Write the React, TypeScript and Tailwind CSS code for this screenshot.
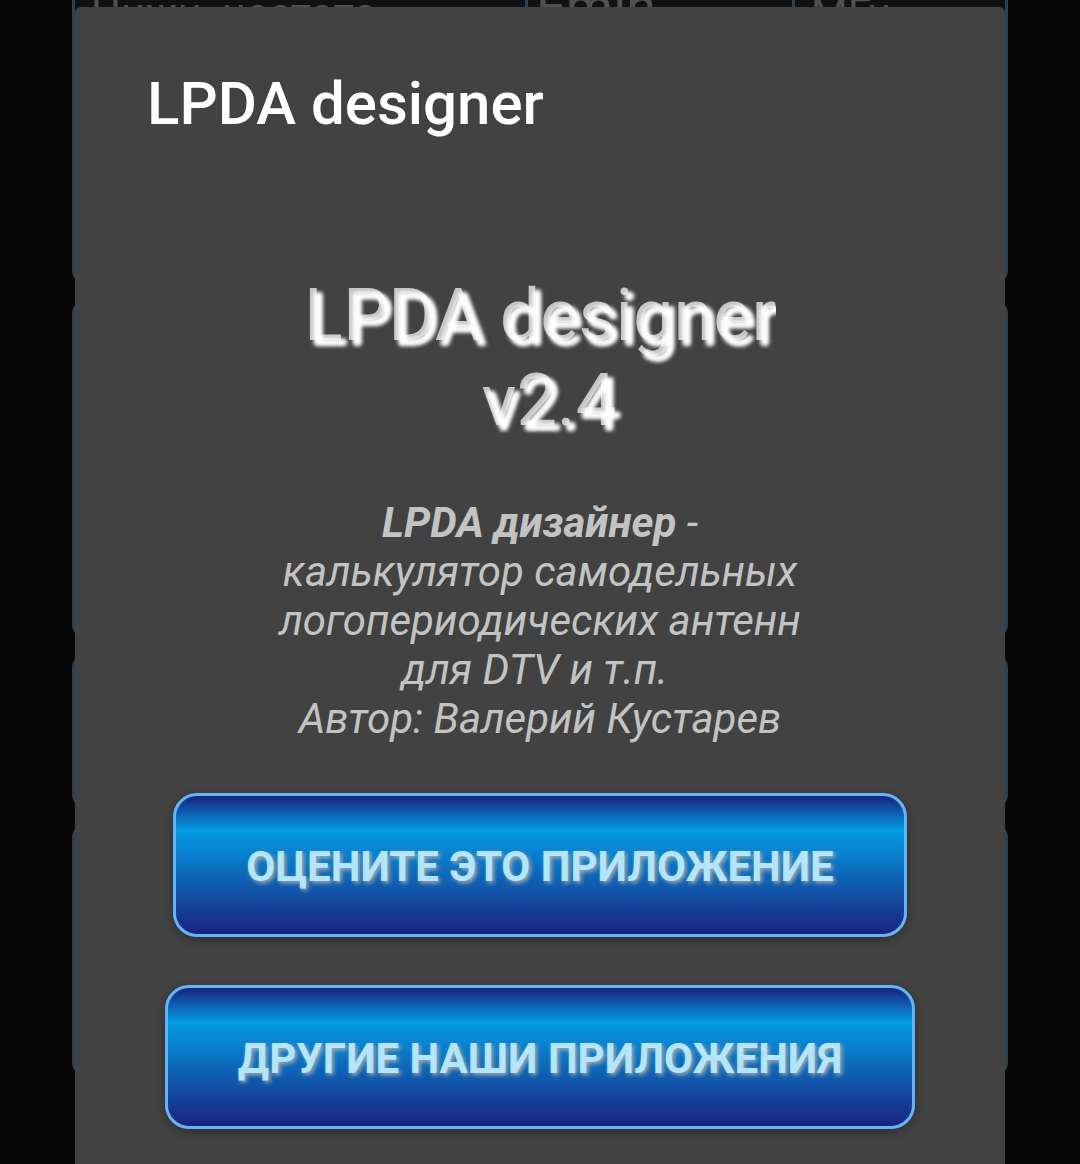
import React from "react";

function ActionButton({ children }: { children: React.ReactNode }) {
  return (
    <button
      type="button"
      className="h-36 max-w-full rounded-3xl border-[3px] border-[#64b5f6] bg-linear-to-b/srgb from-[#1a237e] from-0% via-[#039be5] via-25% to-[#1a237e] to-100% px-[70px] pt-0.5 text-[42px] font-bold uppercase whitespace-nowrap text-[#b3e5fc] shadow-[0_3px_8px_rgba(0,0,0,0.3)] [text-shadow:2px_2px_4px_#aaa]"
    >
      {children}
    </button>
  );
}

function Panel({ className }: { className: string }) {
  return <div className={`rounded-2xl border-[3px] border-[#294256] bg-[#111] ${className}`} />;
}

function Backdrop() {
  return (
    <div aria-hidden="true" className="absolute inset-0 overflow-hidden bg-[#060606] px-[72px]">
      <div className="flex flex-col gap-3">
        <div className="flex h-[286px] overflow-hidden rounded-b-2xl border-x-[3px] border-b-[3px] border-[#294256] bg-[#111] text-[42px] leading-none text-[#505050]">
          <div className="-mt-[7px] grow pl-4">Нижн. частота</div>
          <div className="-mt-5 w-[267px] border-l-[3px] border-[#294256] pl-2 text-[54px]">Fmin</div>
          <div className="-mt-[7px] w-[213px] border-l-[3px] border-[#294256] pl-4">МГц</div>
        </div>
        <Panel className="h-[342px]" />
        <Panel className="h-[158px]" />
        <Panel className="h-[256px]" />
      </div>
    </div>
  );
}

export default function App() {
  return (
    <div className="relative min-h-screen font-[Roboto,sans-serif]">
      <Backdrop />
      <div className="relative px-[75px] pt-[7px]">
        <main
          role="dialog"
          aria-labelledby="title"
          className="flex min-h-[calc(100vh-7px)] flex-col items-center rounded-t-md bg-[#424242] px-[72px] pt-[62px] pb-[34px] text-white/70"
        >
          <h1 id="title" className="self-stretch text-[60px] leading-[70px] font-medium text-white">
            LPDA designer
          </h1>
          <h2 className="mt-[134px] overflow-x-clip text-center text-[72px] leading-[85px] font-normal [text-shadow:5px_5px_4px_#fff,5px_5px_4px_#fff]">
            LPDA designer
            <br />
            &nbsp;v2.4
          </h2>
          <p className="mt-[55px] text-center text-[42px] leading-[49px] italic">
            <b>LPDA дизайнер</b> -<br />
            калькулятор самодельных
            <br />
            логопериодических антенн
            <br />
            для DTV и т.п.&nbsp;
            <br />
            Автор: Валерий Кустарев
          </p>
          <div className="mt-[50px] flex flex-col items-center gap-12">
            <ActionButton>Оцените это приложение</ActionButton>
            <ActionButton>Другие наши приложения</ActionButton>
          </div>
        </main>
      </div>
    </div>
  );
}
